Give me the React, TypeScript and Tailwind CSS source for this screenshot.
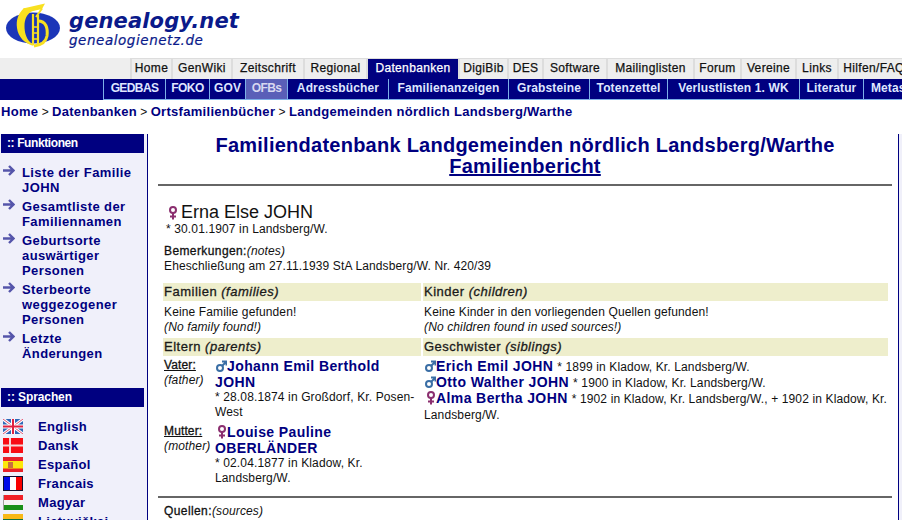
import React from "react";

const top = [
  ["Home", "w-[43px]"], ["GenWiki", "w-[60px]"], ["Zeitschrift", "w-[72px]"], ["Regional", "w-[63px]"], ["Datenbanken", "w-[92px]"],
  ["DigiBib", "w-[49px]"], ["DES", "w-[35px]"], ["Software", "w-[64px]"], ["Mailinglisten", "w-[87px]"], ["Forum", "w-[47px]"],
  ["Vereine", "w-[55px]"], ["Links", "w-[42px]"], ["Hilfen/FAQ", "w-[72px] tracking-[-0.1px]"],
];
const sub = [
  ["GEDBAS", "w-[62px] tracking-[-0.6px]"], ["FOKO", "w-[44px] tracking-[-0.6px]"], ["GOV", "w-[36px]"], ["OFBs", "w-[42px] tracking-[-0.6px]"], ["Adressbücher", "w-[101px]"], ["Familienanzeigen", "w-[120px]"],
  ["Grabsteine", "w-[81px]"], ["Totenzettel", "w-[78px]"], ["Verlustlisten 1. WK", "w-[132px]"], ["Literatur", "w-[64px]"], ["Metasuche", "w-[78px]"],
];

const Female = ({ className = "" }: { className?: string }) => (
  <svg width="10" height="14" viewBox="0 0 10 14" className={`inline-block align-[-2px] ${className}`} fill="none" stroke="#8b2f6f" strokeWidth="2">
    <circle cx="5" cy="4" r="3" />
    <path d="M5 7v6.5M2 10.5h6" />
  </svg>
);
const Male = ({ className = "" }: { className?: string }) => (
  <svg width="11" height="12" viewBox="0 0 11 12" className={`inline-block align-[-1px] ${className}`} fill="none" stroke="#3a6ea5" strokeWidth="2">
    <circle cx="4" cy="8" r="3" />
    <path d="M6.5 5.5 10 2M6 1.5H10.5V5.5" />
  </svg>
);
const Arrow = () => (
  <svg width="12" height="11" viewBox="0 0 12 11" className="shrink-0" fill="none" stroke="#5555aa" strokeWidth="2.4">
    <path d="M0 5.5h10M6 1 10.5 5.5 6 10" />
  </svg>
);

const Funk = ({ children }: { children: React.ReactNode }) => (
  <div className="flex gap-[7px] pl-[2px]">
    <Arrow />
    <a className="font-bold text-[13px] leading-[15px] text-[#000080] tracking-[0.4px]">{children}</a>
  </div>
);

const flags: [string, React.ReactNode][] = [
  ["English", <svg width="20" height="15" viewBox="0 0 20 15"><rect width="20" height="15" fill="#2f68b8"/><path d="M0 0l20 15M20 0L0 15" stroke="#fff" strokeWidth="3"/><path d="M0 0l20 15M20 0L0 15" stroke="#e05070" strokeWidth="1"/><path d="M10 0v15M0 7.5h20" stroke="#fff" strokeWidth="4"/><path d="M10 0v15M0 7.5h20" stroke="#e02040" strokeWidth="2"/></svg>],
  ["Dansk", <svg width="20" height="15" viewBox="0 0 20 15"><rect width="20" height="15" fill="#f80c14"/><path d="M0 7.5h20" stroke="#f4d8d8" strokeWidth="2"/><path d="M7 0v15" stroke="#f4d8d8" strokeWidth="2"/></svg>],
  ["Español", <svg width="20" height="15" viewBox="0 0 20 15"><rect width="20" height="15" fill="#e8202a"/><rect y="4" width="20" height="7.5" fill="#fce80c"/><rect x="5" y="5" width="5" height="6" fill="#c87040"/></svg>],
  ["Francais", <svg width="20" height="15" viewBox="0 0 20 15"><rect width="20" height="15" fill="#101030"/><rect x="1" y="1" width="6" height="13" fill="#0008e8"/><rect x="7" y="1" width="6" height="13" fill="#fff"/><rect x="13" y="1" width="6" height="13" fill="#f80000"/></svg>],
  ["Magyar", <svg width="20" height="15" viewBox="0 0 20 15"><rect width="20" height="5" fill="#f02028"/><rect y="5" width="20" height="5" fill="#f4f4f4"/><rect y="10" width="20" height="5" fill="#189018"/><rect width="1" height="15" fill="#a0a0a0"/></svg>],
  ["Lietuviškai", <svg width="20" height="15" viewBox="0 0 20 15"><rect width="20" height="5" fill="#f8b818"/><rect y="5" width="20" height="5" fill="#107040"/><rect y="10" width="20" height="5" fill="#c02020"/></svg>],
];

const Name = ({ children }: { children: React.ReactNode }) => (
  <a className="font-bold text-[14px] leading-[16px] text-[#000080] tracking-[0.4px]">{children}</a>
);
const Rest = ({ children }: { children: React.ReactNode }) => (
  <span className="text-[12px] leading-[14px]">{children}</span>
);

const Head = ({ a, b }: { a: string; b: string }) => (
  <div className="bg-[#eeeecc] h-[18px] leading-[18px] px-[1px] text-[13px] text-[#1a1a1a] tracking-[0.5px] [-webkit-text-stroke:0.3px_currentColor]">
    {a} <i>({b})</i>
  </div>
);

const Label = ({ a, b }: { a: string; b: string }) => (
  <div className="w-[51px] shrink-0 leading-[15px]">
    <span className="underline [-webkit-text-stroke:0.3px_currentColor]">{a}</span><br /><i>({b})</i>
  </div>
);

const Bar = ({ children, className = "" }: { children: React.ReactNode; className?: string }) => (
  <div className={`bg-[#000080] h-[19px] leading-[19px] text-white font-bold text-[12px] pl-[6px] ${className}`}>{children}</div>
);

export default function App() {
  return (
    <div className="w-[902px] h-[520px] overflow-hidden bg-white font-['Liberation_Sans',Arial,sans-serif] text-[12px] text-[#111] tracking-[0.13px]">
      <header className="h-[58px] flex items-start">
        <svg width="62" height="48" viewBox="0 0 62 48" className="shrink-0 ml-[4px]">
          <ellipse cx="29" cy="28" rx="27" ry="15.5" fill="#1c36b8" />
          <path d="M20 8 C14 14 12 20 13 28 C14 37 21 44 30 46 L26 42 C22 38 20.5 32 20.5 26 C20.5 19 23 14 28 11 Z" fill="#f8e020" />
          <path d="M19 8.5 L41 3.5 L38 9 L27 11.5 Z" fill="#f8e020" />
          <path d="M38 8.5 L32 17" stroke="#f8e020" strokeWidth="2" fill="none" />
          <path d="M29 14 V45 M34 15 V44" stroke="#f8e020" strokeWidth="2.2" fill="none" />
          <path d="M29 27h5M29 33h5M29 39h5" stroke="#f8e020" strokeWidth="1.5" fill="none" />
          <path d="M34 21 C42 21 44 28 43 36 C42 42 37 45 30 46" stroke="#f8e020" strokeWidth="3" fill="none" />
        </svg>
        <div className="ml-[3px] mt-[8px] font-['DejaVu_Sans',sans-serif] italic text-[#0a1a8a]">
          <div className="font-bold text-[21px] leading-[26px]">genealogy.net</div>
          <div className="text-[13.5px] leading-[13px] tracking-[0.55px] [-webkit-text-stroke:0.2px_currentColor]">genealogienetz.de</div>
        </div>
      </header>

      <nav className="h-[21px] bg-[#eeeeee] flex pl-[130px] overflow-hidden">
        {top.map(([t, w], i) => (
          <a key={t} className={`tracking-[0.35px] ${w} shrink-0 h-[21px] leading-[19px] text-center whitespace-nowrap border-t border-r-2 ${i === 0 ? "border-l-2" : ""} border-[#dddddd] [-webkit-text-stroke:0.25px_currentColor] ${t === "Datenbanken" ? "bg-[#000080] text-white" : "text-[#111]"}`}>{t}</a>
        ))}
      </nav>
      <nav className="h-[21px] bg-[#000080] flex pl-[103px] overflow-hidden">
        {sub.map(([t, w]) => (
          <a key={t} className={`${w} shrink-0 h-[21px] leading-[19px] text-center whitespace-nowrap border-l border-b border-[#7db0e8] font-bold ${t === "OFBs" ? "bg-[#5a5fb8] text-[#d8d8f0]" : "text-[#dfe6ff]"}`}>{t}</a>
        ))}
      </nav>
      <div className="h-[25px] pl-[1px] pt-[3px] text-[12px] leading-[18px] tracking-[0]">
        <b className="text-[#000080] text-[13px] tracking-[0.3px]">Home</b> &gt; <b className="text-[#000080] text-[13px] tracking-[0.3px]">Datenbanken</b> &gt; <b className="text-[#000080] text-[13px] tracking-[0.3px]">Ortsfamilienbücher</b> &gt; <b className="text-[#000080] text-[13px] tracking-[0.3px]">Landgemeinden nördlich Landsberg/Warthe</b>
      </div>

      <div className="flex">
        <aside className="w-[148px] h-[386px] mt-[9px] shrink-0 bg-[#f0f0fa] border-r border-[#000080] pl-[1px] pr-[3px]">
          <Bar className="tracking-[-0.4px]">:: Funktionen</Bar>
          <div className="mt-[12px] flex flex-col gap-[4px]">
            <Funk>Liste der Familie<br />JOHN</Funk>
            <Funk>Gesamtliste der<br />Familiennamen</Funk>
            <Funk>Geburtsorte<br />auswärtiger<br />Personen</Funk>
            <Funk>Sterbeorte<br />weggezogener<br />Personen</Funk>
            <Funk>Letzte<br />Änderungen</Funk>
          </div>
          <Bar className="mt-[27px] tracking-[-0.1px]">:: Sprachen</Bar>
          <div className="mt-[10px] flex flex-col">
            {flags.map(([t, f]) => (
              <div key={t} className="h-[19px] flex items-center pl-[2px]">
                <span className="w-[35px] flex">{f}</span>
                <b className="text-[13px] text-[#000080] tracking-[0.3px]">{t}</b>
              </div>
            ))}
          </div>
        </aside>

        <main className="w-[744px] pl-[10px] shrink-0">
          <h1 className="text-center font-bold text-[20px] leading-[21px] text-[#000080] mt-[10px] tracking-[0.25px]">
            Familiendatenbank Landgemeinden nördlich Landsberg/Warthe<br /><span className="underline">Familienbericht</span>
          </h1>
          <hr className="border-t-2 border-[#666] mt-[7px]" />
          <div className="pl-[10px] mt-[15px] text-[18px] leading-[22px] text-[#111] tracking-[0]"><Female className="mr-[3px]" />Erna Else JOHN</div>
          <div className="pl-[8px] leading-[14px] mt-[-1px]">* 30.01.1907 in Landsberg/W.</div>
          <div className="pl-[6px] mt-[8px] leading-[15px]"><span className="[-webkit-text-stroke:0.3px_currentColor] tracking-[0.4px]">Bemerkungen:</span><i>(notes)</i><br />Eheschließung am 27.11.1939 StA Landsberg/W. Nr. 420/39</div>
          <div className="ml-[5px] mt-[9px] grid grid-cols-[258px_465px] gap-x-[2px] w-[725px]">
            <Head a="Familien" b="families" />
            <Head a="Kinder" b="children" />
            <div className="pl-[1px] pt-[4px] leading-[15px] h-[37px]">Keine Familie gefunden!<br /><i>(No family found!)</i></div>
            <div className="pl-[1px] pt-[4px] leading-[15px]">Keine Kinder in den vorliegenden Quellen gefunden!<br /><i>(No children found in used sources!)</i></div>
            <Head a="Eltern" b="parents" />
            <Head a="Geschwister" b="siblings" />
            <div className="pt-[2px] pl-[1px] leading-[15px]">
              <div className="flex">
                <Label a="Vater:" b="father" />
                <div>
                  <div className="text-[14px] leading-[16px]"><Male className="ml-[1px]" /><Name>Johann Emil Berthold JOHN</Name></div>
                  <div>* 28.08.1874 in Großdorf, Kr. Posen-West</div>
                </div>
              </div>
              <div className="flex mt-[4px]">
                <Label a="Mutter:" b="mother" />
                <div>
                  <div className="text-[14px] leading-[16px]"><Female className="ml-[2px]" /><Name>Louise Pauline OBERLÄNDER</Name></div>
                  <div>* 02.04.1877 in Kladow, Kr. Landsberg/W.</div>
                </div>
              </div>
            </div>
            <div className="pt-[2px] pl-[1px] text-[14px] leading-[16px]">
              <div><Male className="ml-[1px]" /><Name>Erich Emil JOHN</Name> <Rest>* 1899 in Kladow, Kr. Landsberg/W.</Rest></div>
              <div><Male className="ml-[1px]" /><Name>Otto Walther JOHN</Name> <Rest>* 1900 in Kladow, Kr. Landsberg/W.</Rest></div>
              <div><Female className="ml-[2px]" /><Name>Alma Bertha JOHN</Name> <Rest>* 1902 in Kladow, Kr. Landsberg/W., + 1902 in Kladow, Kr. Landsberg/W.</Rest></div>
            </div>
          </div>
          <hr className="border-t-2 border-[#666] mt-[10px]" />
          <div className="pl-[6px] mt-[6px] leading-[15px]"><span className="[-webkit-text-stroke:0.3px_currentColor] tracking-[0.4px]">Quellen:</span><i>(sources)</i></div>
        </main>
        <div className="w-[4px] h-[386px] mt-[9px] ml-[6px] shrink-0 bg-[#f0f0fa] border-l border-[#000080]"></div>
      </div>
    </div>
  );
}
